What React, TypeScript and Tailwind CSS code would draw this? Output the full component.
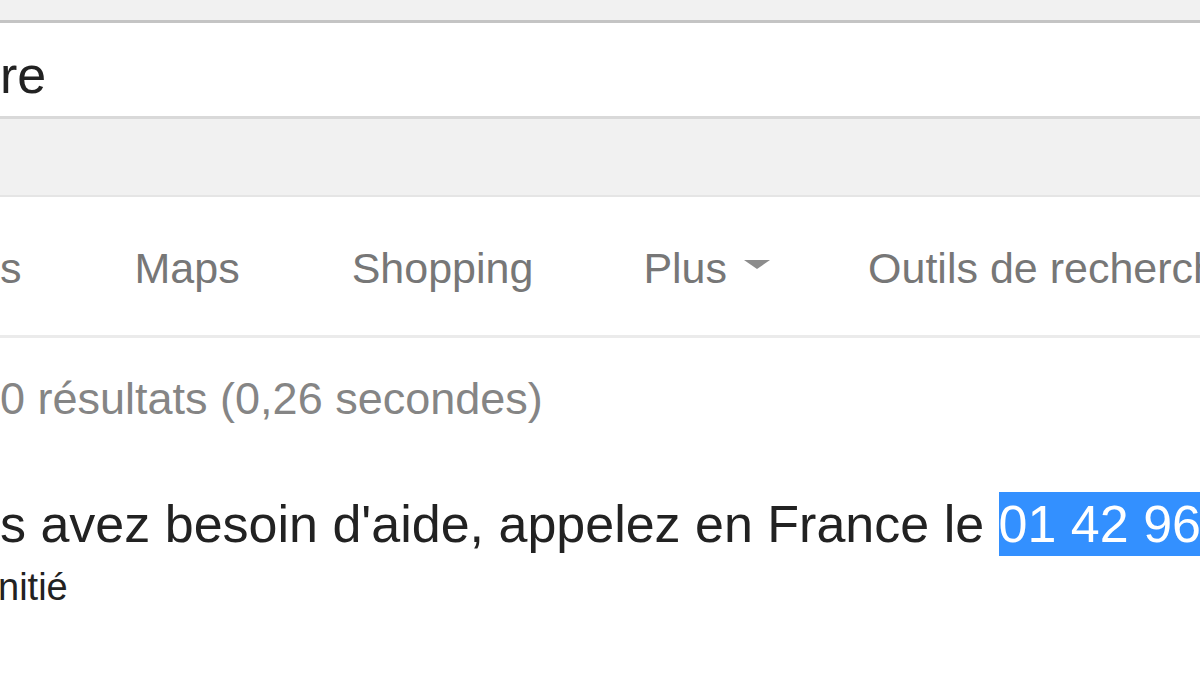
export default function App() {
  return (
    <div className="w-[1200px] h-[675px] overflow-hidden bg-white font-['Liberation_Sans',Arial,sans-serif]">
      {/* search box strip */}
      <div className="h-[20px] bg-[#f1f1f1]" />
      <div className="h-[99px] border-t-[3px] border-b-[3px] border-t-[#c4c4c4] border-b-[#d9d9d9] bg-white pt-[26px]">
        <div className="text-[52px] leading-none text-[#222] whitespace-nowrap">re</div>
      </div>
      <div className="h-[78px] bg-[#f1f1f1] border-b-2 border-[#e5e5e5]" />

      {/* tabs */}
      <div className="h-[141px] border-b-[3px] border-[#ebebeb] pt-[50px]">
        <div className="flex items-start text-[43px] leading-none text-[#777] whitespace-nowrap">
          <span>s</span>
          <span className="ml-[113px]">Maps</span>
          <span className="ml-[112px]">Shopping</span>
          <span className="ml-[110px] flex items-start">
            Plus
            <svg className="ml-[17px] mt-[13px]" width="26" height="9" viewBox="0 0 26 9">
              <path d="M0 0 L26 0 L13 9 Z" fill="#8c8c8c" />
            </svg>
          </span>
          <span className="ml-[98px]">Outils de recherche</span>
        </div>
      </div>

      {/* results */}
      <div className="pt-[38px] text-[45px] leading-none text-[#858585] whitespace-nowrap">
        0 résultats (0,26 secondes)
      </div>

      <div className="mt-[77px] text-[52px] leading-none text-[#222] whitespace-nowrap">
        s avez besoin d'aide, appelez en France le{" "}
        <span className="bg-[#3390ff] text-white py-[3px]">01 42 96 26 26</span>
      </div>
      <div className="mt-[18px] ml-[-2px] text-[38px] leading-none text-[#222] whitespace-nowrap">nitié</div>
    </div>
  );
}
